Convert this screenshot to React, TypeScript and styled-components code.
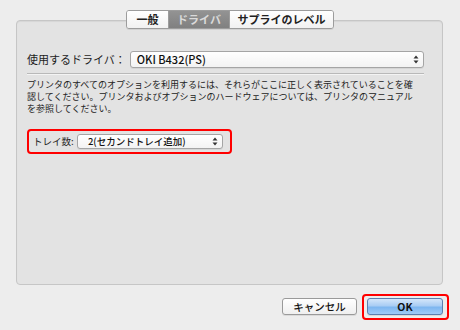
import { createGlobalStyle } from 'styled-components';
import styled from 'styled-components';

const GlobalStyle = createGlobalStyle`
  html, body {
    margin: 0;
    padding: 0;
    background: #ededed;
  }
  body {
    font-family: "Noto Sans CJK JP", "Liberation Sans", sans-serif;
    color: #1a1a1a;
  }
`;

const Window = styled.div`
  width: 460px;
  height: 330px;
  box-sizing: border-box;
  padding: 10px 17px 0 16px;
  background: #ededed;
  display: flex;
  flex-direction: column;
`;

const TabBar = styled.div`
  display: flex;
  justify-content: center;
  margin: 0 0 -9px 1px;
  position: relative;
  z-index: 1;
`;

const TabGroup = styled.div`
  display: flex;
  height: 17px;
  border: 1px solid #9c9c9c;
  border-radius: 3px;
  overflow: hidden;
  box-shadow: 0 1px 0 rgba(0, 0, 0, 0.08);
`;

const Tab = styled.div<{ $active?: boolean; $w: number }>`
  width: ${({ $w }) => $w}px;
  display: flex;
  align-items: center;
  justify-content: center;
  font-size: 11px;
  font-weight: 700;
  line-height: 1;
  color: ${({ $active }) => ($active ? '#dadada' : '#222')};
  background: ${({ $active }) =>
    $active ? 'linear-gradient(#939393, #808080)' : 'linear-gradient(#ffffff, #f1f1f1)'};
  border-left: 1px solid #9c9c9c;
  &:first-child { border-left: none; }
`;

const Panel = styled.div`
  height: 265px;
  box-sizing: border-box;
  background: #e3e3e3;
  border: 1px solid #c6c6c6;
  border-radius: 4px;
  box-shadow: inset 0 1px 1px rgba(0, 0, 0, 0.06);
  padding: 30px 18px 0 10px;
  display: flex;
  flex-direction: column;
`;

const DriverRow = styled.div`
  display: flex;
  align-items: center;
  gap: 4px;
  height: 17px;
`;

const Label = styled.span<{ $size?: number }>`
  font-size: ${({ $size }) => $size ?? 11}px;
  color: #1d1d1d;
  white-space: nowrap;
  line-height: 1;
`;

const Select = styled.div<{ $h: number }>`
  flex: 1;
  height: ${({ $h }) => $h}px;
  box-sizing: border-box;
  display: flex;
  align-items: center;
  justify-content: space-between;
  border: 1px solid #a5a5a5;
  border-radius: 3px;
  background: linear-gradient(#ffffff, #f3f3f3);
  box-shadow: 0 1px 0 rgba(0, 0, 0, 0.06);
  padding: 0 4px 0 6px;
`;

const SelectText = styled.span<{ $size: number }>`
  font-size: ${({ $size }) => $size}px;
  font-weight: 500;
  color: #111;
  line-height: 1;
`;

const Separator = styled.div`
  height: 1px;
  margin-top: 5px;
  background: #b9b9b9;
  border-bottom: 1px solid #f4f4f4;
`;

const Note = styled.p`
  margin: 4px 0 0;
  font-size: 9px;
  line-height: 12px;
  color: #222;
  white-space: nowrap;
`;

const Highlight = styled.div<{ $w: number }>`
  width: ${({ $w }) => $w}px;
  box-sizing: border-box;
  border: 2px solid #ff0000;
  border-radius: 4px;
`;

const TrayBox = styled(Highlight)`
  margin-top: 14px;
  height: 25px;
  display: flex;
  align-items: center;
  gap: 3px;
  padding: 0 7px 0 4px;
`;

const Footer = styled.div`
  flex: 1;
  display: flex;
  justify-content: flex-end;
  align-items: flex-start;
  padding: 9px 0 0;
  margin-right: -6px;
`;

const Button = styled.div<{ $primary?: boolean }>`
  width: ${({ $primary }) => ($primary ? 76 : 75)}px;
  height: 17px;
  box-sizing: border-box;
  display: flex;
  align-items: center;
  justify-content: center;
  font-size: 10.5px;
  font-weight: ${({ $primary }) => ($primary ? 700 : 500)};
  color: #111;
  border-radius: 3px;
  border: 1px solid ${({ $primary }) => ($primary ? '#5b7fae' : '#9a9a9a')};
  background: ${({ $primary }) =>
    $primary
      ? 'linear-gradient(#d4e6fa 0%, #a9cdf4 45%, #7db6f0 55%, #9fcbf7 100%)'
      : 'linear-gradient(#ffffff, #efefef)'};
  box-shadow: 0 1px 0 rgba(0, 0, 0, 0.08);
`;

const CancelSlot = styled.div`
  padding-top: 4px;
  margin-right: 5px;
`;

const OkBox = styled(Highlight)`
  height: 26px;
  padding: 2px 3px;
  display: flex;
`;

function Arrows() {
  return (
    <svg width="6" height="9" viewBox="0 0 6 9">
      <path d="M3 0.5 L5.5 3.5 H0.5 Z" fill="#333" />
      <path d="M3 8.5 L5.5 5.5 H0.5 Z" fill="#333" />
    </svg>
  );
}

export default function App() {
  return (
    <>
      <GlobalStyle />
      <Window>
        <TabBar>
          <TabGroup>
            <Tab $w={41}>一般</Tab>
            <Tab $w={60} $active>ドライバ</Tab>
            <Tab $w={103}>サプライのレベル</Tab>
          </TabGroup>
        </TabBar>
        <Panel>
          <DriverRow>
            <Label>使用するドライバ：</Label>
            <Select $h={17}>
              <SelectText $size={11}>OKI B432(PS)</SelectText>
              <Arrows />
            </Select>
          </DriverRow>
          <Separator />
          <Note>
            プリンタのすべてのオプションを利用するには、それらがここに正しく表示されていることを確
            <br />
            認してください。プリンタおよびオプションのハードウェアについては、プリンタのマニュアル
            <br />
            を参照してください。
          </Note>
          <TrayBox $w={205}>
            <Label $size={9.5}>トレイ数:</Label>
            <Select $h={15}>
              <SelectText $size={9.5}>&nbsp;&nbsp;2(セカンドトレイ追加)</SelectText>
              <Arrows />
            </Select>
          </TrayBox>
        </Panel>
        <Footer>
          <CancelSlot>
            <Button>キャンセル</Button>
          </CancelSlot>
          <OkBox $w={87}>
            <Button $primary>OK</Button>
          </OkBox>
        </Footer>
      </Window>
    </>
  );
}
